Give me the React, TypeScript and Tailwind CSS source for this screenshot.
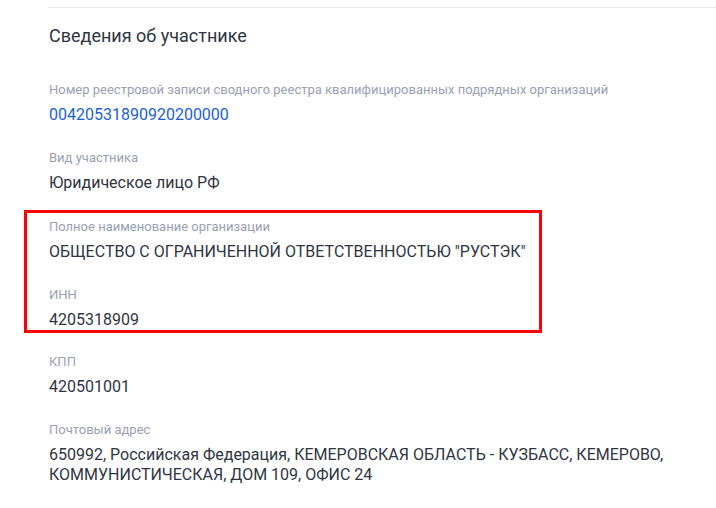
import React from 'react';

type Field = { label: string; value: React.ReactNode; link?: boolean };

function InfoField({ label, value, link }: Field) {
  return (
    <div className="flex flex-col gap-[7px]">
      <div className="text-[13px] leading-[16px] text-[#9aa1b2]">{label}</div>
      <div
        className={
          link
            ? 'text-[16px] leading-[20px] text-[#1e5fd8]'
            : 'text-[16px] leading-[20px] text-[#2f3542]'
        }
      >
        {value}
      </div>
    </div>
  );
}

export default function App() {
  return (
    <div
      className="min-h-[508px] w-[716px] bg-white pt-[7px]"
      style={{ fontFamily: 'Roboto, "Liberation Sans", sans-serif' }}
    >
      {/* top divider */}
      <div className="ml-[48px] h-px bg-[#e6e8ef]" />

      <div className="pl-[49px] pt-[16px]">
        <h2 className="text-[18px] leading-[24px] text-[#2f3542]">Сведения об участнике</h2>

        <div className="mt-[34px] flex flex-col gap-[25px]">
          <InfoField
            label="Номер реестровой записи сводного реестра квалифицированных подрядных организаций"
            value="00420531890920200000"
            link
          />
          <InfoField label="Вид участника" value="Юридическое лицо РФ" />

          {/* highlighted block */}
          <div className="-mt-[8px] -ml-[25px] w-[518px] border-[3px] border-[#ff0000] pt-[6px] pb-0 pl-[22px]">
            <div className="flex flex-col gap-[25px]">
              <InfoField
                label="Полное наименование организации"
                value={'ОБЩЕСТВО С ОГРАНИЧЕННОЙ ОТВЕТСТВЕННОСТЬЮ "РУСТЭК"'}
              />
              <InfoField label="ИНН" value="4205318909" />
            </div>
          </div>

          <div className="-mt-[4px] flex flex-col gap-[25px]">
            <InfoField label="КПП" value="420501001" />
            <InfoField
              label="Почтовый адрес"
              value={
                <>
                  650992, Российская Федерация, КЕМЕРОВСКАЯ ОБЛАСТЬ - КУЗБАСС, КЕМЕРОВО,
                  <br />
                  КОММУНИСТИЧЕСКАЯ, ДОМ 109, ОФИС 24
                </>
              }
            />
          </div>
        </div>
      </div>
    </div>
  );
}
